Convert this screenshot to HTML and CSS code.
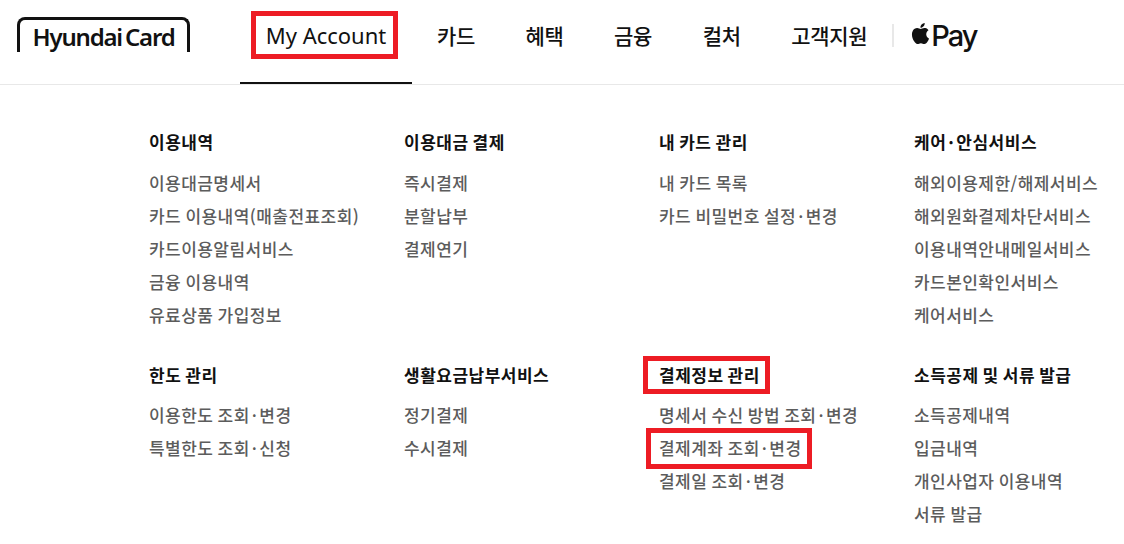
FILE: index.html
```html
<!DOCTYPE html>
<html lang="ko">

<head>
    <meta charset="UTF-8">
    <title>Hyundai Card</title>
    <link rel="stylesheet" href="styles.css">
</head>

<body>
    <header class="header">
        <a class="logo"><span class="logo-text">Hyundai Card</span></a>
        <nav class="gnb">
            <a class="gnb-account"><span class="mark mark-account">My Account</span></a>
            <div class="gnb-items">
                <a>카드</a>
                <a>혜택</a>
                <a>금융</a>
                <a>컬처</a>
                <a>고객지원</a>
            </div>
            <span class="gnb-sep"></span>
            <a class="gnb-pay">
                <svg class="apple" viewBox="0 0 24 24" width="21" height="21">
                    <path d="M12.152 6.896c-.948 0-2.415-1.078-3.96-1.04-2.04.027-3.91 1.183-4.961 3.014-2.117 3.675-.546 9.103 1.519 12.09 1.013 1.454 2.208 3.09 3.792 3.039 1.52-.065 2.09-.987 3.935-.987 1.831 0 2.35.987 3.96.948 1.637-.026 2.676-1.48 3.676-2.948 1.156-1.688 1.636-3.325 1.662-3.415-.039-.013-3.182-1.221-3.22-4.857-.026-3.04 2.48-4.494 2.597-4.559-1.429-2.09-3.623-2.324-4.39-2.376-2-.156-3.675 1.09-4.61 1.09zM15.53 3.83c.843-1.012 1.4-2.427 1.245-3.83-1.207.052-2.662.805-3.532 1.818-.78.896-1.454 2.338-1.273 3.714 1.338.104 2.715-.688 3.559-1.701"/>
                </svg>
                <span>Pay</span>
            </a>
        </nav>
    </header>

    <main class="menu">
        <section class="group">
            <h3>이용내역</h3>
            <ul>
                <li>이용대금명세서</li>
                <li>카드 이용내역(매출전표조회)</li>
                <li>카드이용알림서비스</li>
                <li>금융 이용내역</li>
                <li>유료상품 가입정보</li>
            </ul>
        </section>
        <section class="group">
            <h3>이용대금 결제</h3>
            <ul>
                <li>즉시결제</li>
                <li>분할납부</li>
                <li>결제연기</li>
            </ul>
        </section>
        <section class="group">
            <h3>내 카드 관리</h3>
            <ul>
                <li>내 카드 목록</li>
                <li>카드 비밀번호 설정<span class="dot">·</span>변경</li>
            </ul>
        </section>
        <section class="group">
            <h3>케어<span class="dot">·</span>안심서비스</h3>
            <ul>
                <li>해외이용제한/해제서비스</li>
                <li>해외원화결제차단서비스</li>
                <li>이용내역안내메일서비스</li>
                <li>카드본인확인서비스</li>
                <li>케어서비스</li>
            </ul>
        </section>
        <section class="group group-low">
            <h3>한도 관리</h3>
            <ul>
                <li>이용한도 조회<span class="dot">·</span>변경</li>
                <li>특별한도 조회<span class="dot">·</span>신청</li>
            </ul>
        </section>
        <section class="group group-low">
            <h3>생활요금납부서비스</h3>
            <ul>
                <li>정기결제</li>
                <li>수시결제</li>
            </ul>
        </section>
        <section class="group group-low">
            <h3><span class="mark mark-title">결제정보 관리</span></h3>
            <ul>
                <li>명세서 수신 방법 조회<span class="dot">·</span>변경</li>
                <li><span class="mark mark-item">결제계좌 조회<span class="dot">·</span>변경</span></li>
                <li>결제일 조회<span class="dot">·</span>변경</li>
            </ul>
        </section>
        <section class="group group-low">
            <h3>소득공제 및 서류 발급</h3>
            <ul>
                <li>소득공제내역</li>
                <li>입금내역</li>
                <li>개인사업자 이용내역</li>
                <li>서류 발급</li>
            </ul>
        </section>
    </main>
</body>

</html>
```

FILE: styles.css
```css
* {
    box-sizing: border-box;
}

body {
    margin: 0;
    background-color: #fff;
    color: #111;
    font-family: "Noto Sans CJK KR", "Noto Sans", sans-serif;
}

.header {
    display: flex;
    height: 85px;
    padding-left: 17px;
    border-bottom: 1px solid #e8e8e8;
}

.logo {
    display: flex;
    justify-content: center;
    width: 173px;
    height: 35px;
    margin-top: 17px;
    padding-top: 2px;
    border: 3px solid #111;
    border-bottom: none;
    border-radius: 8px 8px 0 0;
}

.logo-text {
    font-family: "Noto Sans", sans-serif;
    font-size: 24px;
    font-weight: 600;
    line-height: 30px;
    letter-spacing: -1.2px;
    word-spacing: -2px;
    white-space: nowrap;
}

.gnb {
    display: flex;
    align-items: center;
    height: 84px;
    margin-left: 50px;
    padding-bottom: 14px;
    font-size: 21px;
    font-weight: 500;
}

.gnb-account {
    display: flex;
    justify-content: center;
    align-items: center;
    width: 172px;
    height: 84px;
    margin-bottom: -14px;
    padding-bottom: 12px;
    border-bottom: 2px solid #111;
    font-family: "Noto Sans", sans-serif;
    font-size: 22px;
    font-weight: 400;
    white-space: nowrap;
}

.gnb-items {
    display: flex;
    gap: 50.5px;
    margin-left: 25px;
    letter-spacing: -0.3px;
}

.gnb-sep {
    width: 2px;
    height: 23px;
    margin-left: 25px;
    background-color: #e8e8e8;
}

.gnb-pay {
    display: flex;
    align-items: center;
    margin-left: 16px;
    font-family: "Inter", sans-serif;
    font-size: 29px;
    font-weight: 500;
    letter-spacing: -2px;
}

.apple {
    margin-bottom: 3px;
    fill: #111;
}

.menu {
    display: grid;
    grid-template-columns: repeat(4, 255px);
    row-gap: 31px;
    padding: 44px 0 0 149px;
}

.group h3 {
    margin: 0;
    font-size: 17px;
    font-weight: 700;
    line-height: 26px;
    letter-spacing: 0.5px;
    word-spacing: -1.2px;
    white-space: nowrap;
}

.group ul {
    margin: 11px 0 0;
    padding: 0;
    list-style: none;
}

.group-low ul {
    margin-top: 10px;
}

.group li {
    height: 33px;
    color: #5c5c5c;
    font-size: 17px;
    font-weight: 500;
    line-height: 33px;
    letter-spacing: 0.45px;
    word-spacing: -1px;
    white-space: nowrap;
}

.dot {
    margin: 0 2px;
}

/* red boxes around the highlighted entries */
.mark {
    position: relative;
    display: inline-block;
}

.mark::after {
    content: "";
    position: absolute;
    border: 5px solid #ed1c24;
}

.mark-account::after {
    inset: -9px -12px -9px -15px;
}

.mark-title::after {
    inset: -6px -10px -6px -16px;
}

.mark-item::after {
    inset: -3px -11px -5px -13px;
}
```
